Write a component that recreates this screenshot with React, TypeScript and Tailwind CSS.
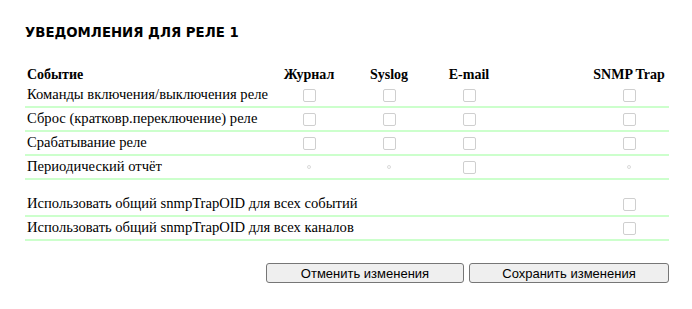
import React from 'react';

// Relay notification settings panel
type Cell = 'box' | 'dot' | 'none';

interface EventRow {
  label: string;
  cells: Cell[];
}

const events: EventRow[] = [
  { label: 'Команды включения/выключения реле', cells: ['box', 'box', 'box', 'none', 'box'] },
  { label: 'Сброс (кратковр.переключение) реле', cells: ['box', 'box', 'box', 'none', 'box'] },
  { label: 'Срабатывание реле', cells: ['box', 'box', 'box', 'none', 'box'] },
  { label: 'Периодический отчёт', cells: ['dot', 'dot', 'box', 'none', 'dot'] },
];

const options: EventRow[] = [
  { label: 'Использовать общий snmpTrapOID для всех событий', cells: ['none', 'none', 'none', 'none', 'box'] },
  { label: 'Использовать общий snmpTrapOID для всех каналов', cells: ['none', 'none', 'none', 'none', 'box'] },
];

const headers = ['Журнал', 'Syslog', 'E-mail', '', 'SNMP Trap'];

function Check({ kind }: { kind: Cell }) {
  if (kind === 'box') {
    return <span className="block w-[13px] h-[13px] rounded-[2px] border border-[#cfcfcf] bg-white" />;
  }
  if (kind === 'dot') {
    return <span className="block w-[4px] h-[4px] rounded-full border border-[#dadada]" />;
  }
  return null;
}

function Row({ row }: { row: EventRow }) {
  return (
    <div className="grid grid-cols-[244px_80px_80px_80px_80px_80px] h-[24px] items-center border-b-2 border-[#ccffcc]">
      <div className="pl-[2px] whitespace-nowrap text-[14.6px]">{row.label}</div>
      {row.cells.map((c, i) => (
        <div key={i} className="flex justify-center">
          <Check kind={c} />
        </div>
      ))}
    </div>
  );
}

export default function App() {
  return (
    <div className="w-[692px] h-[309px] bg-white pl-[25px] pt-[22px] text-black">
      <h2 className="h-[22px] leading-[22px] text-[13.3px] font-bold font-['DejaVu_Sans',sans-serif]">
        УВЕДОМЛЕНИЯ ДЛЯ РЕЛЕ 1
      </h2>

      <div className="mt-[20px] w-[644px] font-['Liberation_Serif',serif] text-[14px]">
        <div className="grid grid-cols-[244px_80px_80px_80px_80px_80px] h-[20px] items-center font-bold">
          <div className="pl-[2px]">Событие</div>
          {headers.map((h, i) => (
            <div key={i} className="text-center whitespace-nowrap">{h}</div>
          ))}
        </div>
        {events.map((r) => (
          <Row key={r.label} row={r} />
        ))}
        <div className="h-[13px]" />
        {options.map((r) => (
          <Row key={r.label} row={r} />
        ))}
      </div>

      <div className="mt-[22px] w-[644px] flex justify-end gap-[5px] font-['Liberation_Sans',sans-serif] text-[13px]">
        <button className="w-[198px] h-[20px] bg-[#efefef] border border-[#767676] rounded-[3px] leading-none">
          Отменить изменения
        </button>
        <button className="w-[200px] h-[20px] bg-[#efefef] border border-[#767676] rounded-[3px] leading-none">
          Сохранить изменения
        </button>
      </div>
    </div>
  );
}
